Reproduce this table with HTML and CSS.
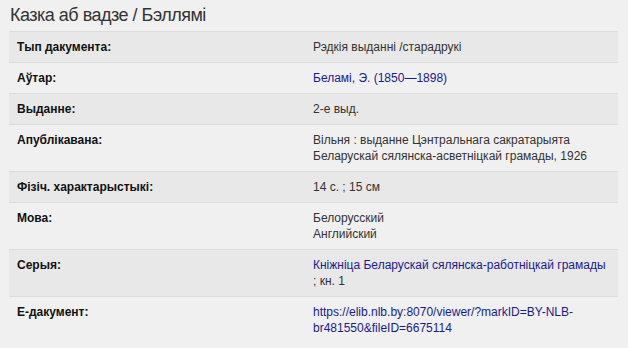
FILE: index.html
```html
<!DOCTYPE html>
<html>
<head>
<meta charset="utf-8">
<link rel="stylesheet" href="styles.css">
</head>
<body>
<div class="page">
  <h1 class="title">Казка аб вадзе / Бэллямі</h1>
  <table class="info">
    <tr><th>Тып дакумента:</th><td>Рэдкія выданні /старадрукі</td></tr>
    <tr><th>Аўтар:</th><td><a href="#">Белaмі, Э. (1850—1898)</a></td></tr>
    <tr><th>Выданне:</th><td>2-е выд.</td></tr>
    <tr><th>Апублікавана:</th><td>Вільня : выданне Цэнтральнага сакратарыята<br>Беларускай сялянска-асветніцкай грамады, 1926</td></tr>
    <tr><th>Фізіч. характарыстыкі:</th><td>14 с. ; 15 см</td></tr>
    <tr><th>Мова:</th><td>Белорусский<br>Английский</td></tr>
    <tr><th>Серыя:</th><td><a href="#" class="nowrap">Кніжніца Беларускай сялянска-работніцкай грамады</a><br>; кн. 1</td></tr>
    <tr><th>Е-дакумент:</th><td><a href="#">https://elib.nlb.by:8070/viewer/?markID=BY-NLB-<br>br481550&amp;fileID=6675114</a></td></tr>
  </table>
</div>
</body>
</html>
```

FILE: styles.css
```css
html, body {
  margin: 0;
  padding: 0;
  background: #f0f0f0;
}
.page {
  padding: 4px 10px 0 9px;
  font-family: "Liberation Sans", Arial, sans-serif;
  color: #333;
}
.title {
  margin: 0 0 4px 1px;
  font-size: 18px;
  letter-spacing: -0.5px;
  font-weight: normal;
  line-height: 23px;
  color: #333;
}
.info {
  width: 609px;
  border-collapse: collapse;
  font-size: 12px;
  line-height: 16px;
  table-layout: fixed;
}
.info th, .info td {
  text-align: left;
  vertical-align: top;
  padding: 7px 8px 7px 8px;
  border-top: 1px solid #dcdcdc;
}
.info th {
  width: 280px;
  font-weight: bold;
  color: #111;
}
.info tr:nth-child(odd) {
  background: #e8e8e8;
}
.info a {
  color: #1a1a8c;
  text-decoration: none;
}
.nowrap {
  white-space: nowrap;
}
```
